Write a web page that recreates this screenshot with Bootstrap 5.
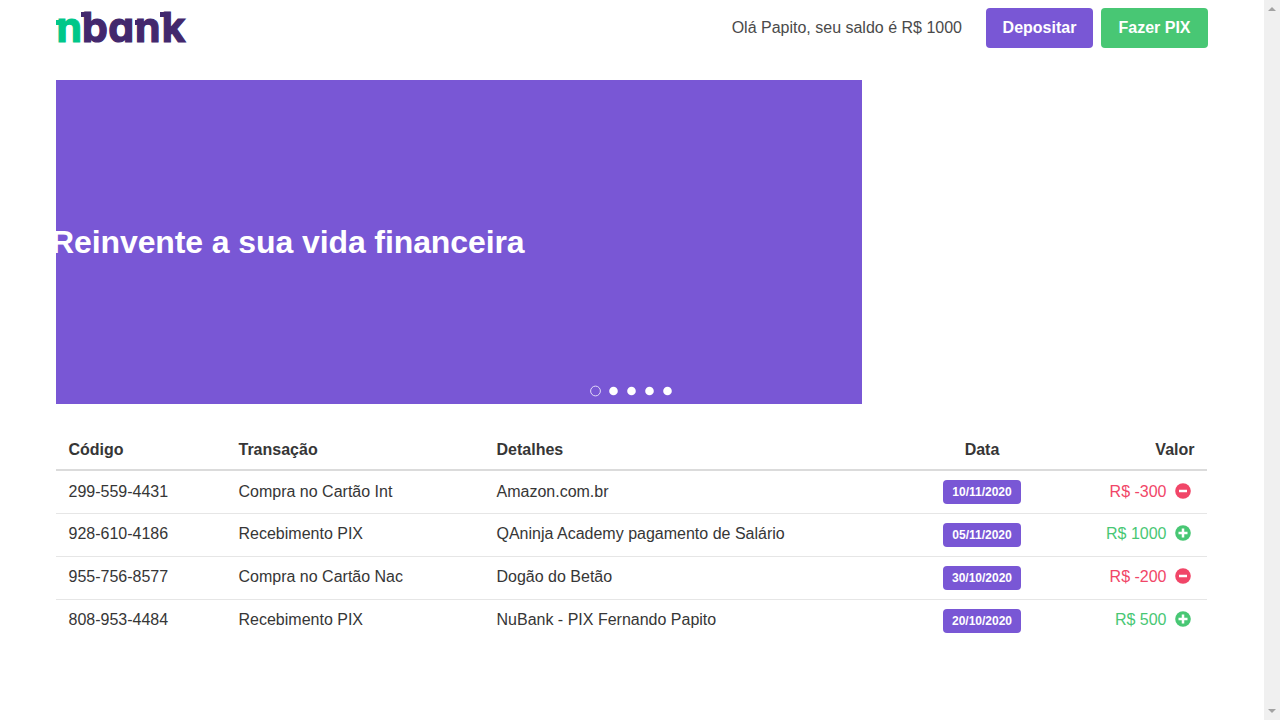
<!DOCTYPE html>
<html lang="pt-BR">
<head>
<meta charset="utf-8">
<meta name="viewport" content="width=device-width, initial-scale=1">
<title>nbank</title>
<link rel="stylesheet" href="https://cdn.jsdelivr.net/npm/bootstrap@5.3.0/dist/css/bootstrap.min.css">
<style>
body{font-family:"Liberation Sans",Arial,sans-serif;color:#4a4a4a;height:720px;overflow:hidden}
.page{width:1152px;margin-left:56px}
.topbar{height:56px}
.logo{overflow:visible}
.logo text{font-family:Inter,"Liberation Sans",sans-serif;font-weight:700;font-size:41px;font-feature-settings:"cv11","ss02";stroke-width:1.2}
.btn-main{width:107px;height:40px;border:0;border-radius:4px;font-weight:700;color:#fff;padding:0}
.violet,.violet:hover{background:#7957d5;color:#fff}
.green,.green:hover{background:#48c774;color:#fff}
.hero{height:324px;margin-top:24px}
.slide{width:70%;background:#7957d5}
.slide h1{font-size:32px;font-weight:700;line-height:36px;margin-left:-5px;letter-spacing:-.1px;white-space:nowrap;color:#fff}
.dots{left:534px;bottom:7px}
.statement{table-layout:fixed;margin-top:24px;color:#363636;--bs-table-color:#363636;width:1151px}
.statement>:not(caption)>*>*{padding:8px 12.5px;border-color:#e6e6e6;height:43px;line-height:24px;color:#363636}
.statement>thead>tr>th{border-bottom:2px solid #dbdbdb;height:42px;padding-top:9px;padding-bottom:7px}
.statement>tbody>tr:first-child>td{padding-top:9px;padding-bottom:8px}
.statement>tbody>tr:first-child .day{margin-top:0}
.statement>tbody>tr:last-child>td{border-bottom:0}
.day{font-size:12px;font-weight:600;line-height:24px;height:24px;width:78px;padding:0;border-radius:4px;display:inline-block;color:#fff;vertical-align:top;margin-top:1px}
.statement .out{color:#f14668}
.statement .in{color:#48c774}
.sign{width:16px;height:16px;margin:0 4px 0 8px;vertical-align:-2px}
.scroller{width:16px;background:#f0f0f0;padding:6px 4px 5px 4px}
</style>
</head>
<body>
<div class="page">
  <header class="topbar d-flex align-items-center justify-content-between">
    <svg class="logo" width="132" height="40" viewBox="0 0 132 40" role="img" aria-label="nbank">
      <g fill="#00c789" stroke="#00c789"><text x="0.5" y="34.4">n</text><rect x="0" y="12" width="8" height="5" stroke="none"/></g>
      <g fill="#43286d" stroke="#43286d"><text y="34.4" x="26 52.3 79 105.8">bank</text>
      <g stroke="none"><rect x="25" y="4" width="8" height="5"/><rect x="79" y="12" width="8" height="5"/><rect x="104" y="4" width="8" height="5"/></g></g>
    </svg>
    <div class="d-flex align-items-center">
      <span class="me-4">Olá Papito, seu saldo é R$ 1000</span>
      <button class="btn btn-main violet me-2">Depositar</button>
      <button class="btn btn-main green">Fazer PIX</button>
    </div>
  </header>
  <section class="hero position-relative d-flex">
    <div class="slide d-flex align-items-center overflow-hidden"><h1 class="mb-0">Reinvente a sua vida financeira</h1></div>
    <svg class="dots position-absolute" width="84" height="12" fill="#fff"><circle cx="5.5" cy="6" r="4.9" fill="none" stroke="#e3daf7"/><circle cx="23.5" cy="6" r="4.3"/><circle cx="41.5" cy="6" r="4.3"/><circle cx="59.5" cy="6" r="4.3"/><circle cx="77.5" cy="6" r="4.3"/></svg>
  </section>
  <table class="statement table mb-0">
    <colgroup><col style="width:170px"><col style="width:258px"><col style="width:428px"><col style="width:140px"><col></colgroup>
    <thead><tr><th>Código</th><th>Transação</th><th>Detalhes</th><th class="text-center">Data</th><th class="text-end">Valor</th></tr></thead>
    <tbody>
      <tr><td>299-559-4431</td><td>Compra no Cartão Int</td><td>Amazon.com.br</td><td class="text-center"><span class="day violet">10/11/2020</span></td><td class="text-end out">R$ -300<svg class="sign" viewBox="0 0 16 16"><circle cx="8" cy="8" r="7.8" fill="currentColor"/><path d="M4 8h8" stroke="#fff" stroke-width="2.5"/></svg></td></tr>
      <tr><td>928-610-4186</td><td>Recebimento PIX</td><td>QAninja Academy pagamento de Salário</td><td class="text-center"><span class="day violet">05/11/2020</span></td><td class="text-end in">R$ 1000<svg class="sign" viewBox="0 0 16 16"><circle cx="8" cy="8" r="7.8" fill="currentColor"/><path d="M3.5 8h9M8 3.5v9" stroke="#fff" stroke-width="2.5"/></svg></td></tr>
      <tr><td>955-756-8577</td><td>Compra no Cartão Nac</td><td>Dogão do Betão</td><td class="text-center"><span class="day violet">30/10/2020</span></td><td class="text-end out">R$ -200<svg class="sign" viewBox="0 0 16 16"><circle cx="8" cy="8" r="7.8" fill="currentColor"/><path d="M4 8h8" stroke="#fff" stroke-width="2.5"/></svg></td></tr>
      <tr><td>808-953-4484</td><td>Recebimento PIX</td><td>NuBank - PIX Fernando Papito</td><td class="text-center"><span class="day violet">20/10/2020</span></td><td class="text-end in">R$ 500<svg class="sign" viewBox="0 0 16 16"><circle cx="8" cy="8" r="7.8" fill="currentColor"/><path d="M3.5 8h9M8 3.5v9" stroke="#fff" stroke-width="2.5"/></svg></td></tr>
    </tbody>
  </table>
</div>
<div class="scroller position-fixed top-0 end-0 h-100 d-flex flex-column justify-content-between">
  <svg width="8" height="6"><path d="M0 5L4 1L8 5Z" fill="#a3a3a3"/></svg>
  <svg width="8" height="6"><path d="M0 0L4 4L8 0Z" fill="#a3a3a3"/></svg>
</div>
<script src="https://cdn.jsdelivr.net/npm/bootstrap@5.3.0/dist/js/bootstrap.bundle.min.js"></script>
</body>
</html>
